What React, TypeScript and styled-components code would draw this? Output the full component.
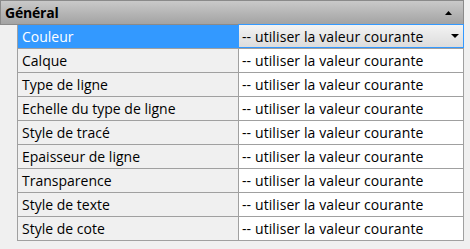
import React from "react";
import styled, { createGlobalStyle } from "styled-components";

const GlobalStyle = createGlobalStyle`
  html, body {
    margin: 0;
    padding: 0;
    background: #f0f0f0;
  }
  body {
    font-family: "Open Sans", "Noto Sans", sans-serif;
    font-size: 14px;
    color: #000;
  }
`;

const rows = [
  "Couleur",
  "Calque",
  "Type de ligne",
  "Echelle du type de ligne",
  "Style de tracé",
  "Epaisseur de ligne",
  "Transparence",
  "Style de texte",
  "Style de cote",
];

const VALUE = "-- utiliser la valeur courante";

const App: React.FC = () => {
  return (
    <>
      <GlobalStyle />
      <Panel>
        <Header>
          <HeaderTitle>Général</HeaderTitle>
          <Arrow viewBox="0 0 7 4" width="7" height="4">
            <polygon points="0,4 7,4 3.5,0" fill="#000" />
          </Arrow>
        </Header>
        <Grid>
          {rows.map((label, i) => (
            <Row key={label}>
              <NameCell selected={i === 0}>{label}</NameCell>
              <ValueCell>
                {i === 0 ? (
                  <Combo>
                    <ValueLabel>{VALUE}</ValueLabel>
                    <Arrow viewBox="0 0 8 4" width="8" height="4">
                      <polygon points="0,0 8,0 4,4" fill="#000" />
                    </Arrow>
                  </Combo>
                ) : (
                  <ValueText>{VALUE}</ValueText>
                )}
              </ValueCell>
            </Row>
          ))}
        </Grid>
      </Panel>
    </>
  );
};

export default App;

const Panel = styled.div`
  width: 464px;
  background: #f0f0f0;
`;

const Header = styled.div`
  box-sizing: border-box;
  height: 25px;
  border: 1px solid #8a8a8a;
  background: linear-gradient(to bottom, #c9c9c9, #a3a3a3);
  display: flex;
  align-items: center;
  justify-content: space-between;
  padding: 0 11px 0 4px;
`;

const HeaderTitle = styled.span`
  font-weight: bold;
  font-size: 14px;
  letter-spacing: -0.2px;
`;

const Arrow = styled.svg`
  display: block;
  flex: none;
`;

const Grid = styled.div`
  margin-left: 17px;
  width: 447px;
  box-sizing: border-box;
  border-left: 1px solid #a0a0a0;
  border-right: 1px solid #a0a0a0;
`;

const Row = styled.div`
  display: grid;
  grid-template-columns: 221px 1fr;
  height: 24px;
  box-sizing: border-box;
  border-bottom: 1px solid #a0a0a0;
`;

const NameCell = styled.div<{ selected?: boolean }>`
  display: flex;
  align-items: center;
  padding-left: 4px;
  border-right: 1px solid #a0a0a0;
  background: ${(p) => (p.selected ? "#3399ff" : "#f0f0f0")};
  color: ${(p) => (p.selected ? "#fff" : "#000")};
  white-space: nowrap;
`;

const ValueCell = styled.div`
  background: #fff;
  display: flex;
  align-items: stretch;
`;

const ValueLabel = styled.span`
  letter-spacing: 0.1px;
`;

const ValueText = styled.span`
  display: flex;
  align-items: center;
  padding-left: 3px;
  white-space: nowrap;
  letter-spacing: 0.1px;
`;

const Combo = styled.div`
  flex: 1;
  box-sizing: border-box;
  margin: -1px -1px 0 -1px;
  border: 1px solid #3399ff;
  background: linear-gradient(to bottom, #f3f3f3, #dcdcdc);
  display: flex;
  align-items: center;
  justify-content: space-between;
  padding: 0 4px 0 3px;
  white-space: nowrap;
`;
